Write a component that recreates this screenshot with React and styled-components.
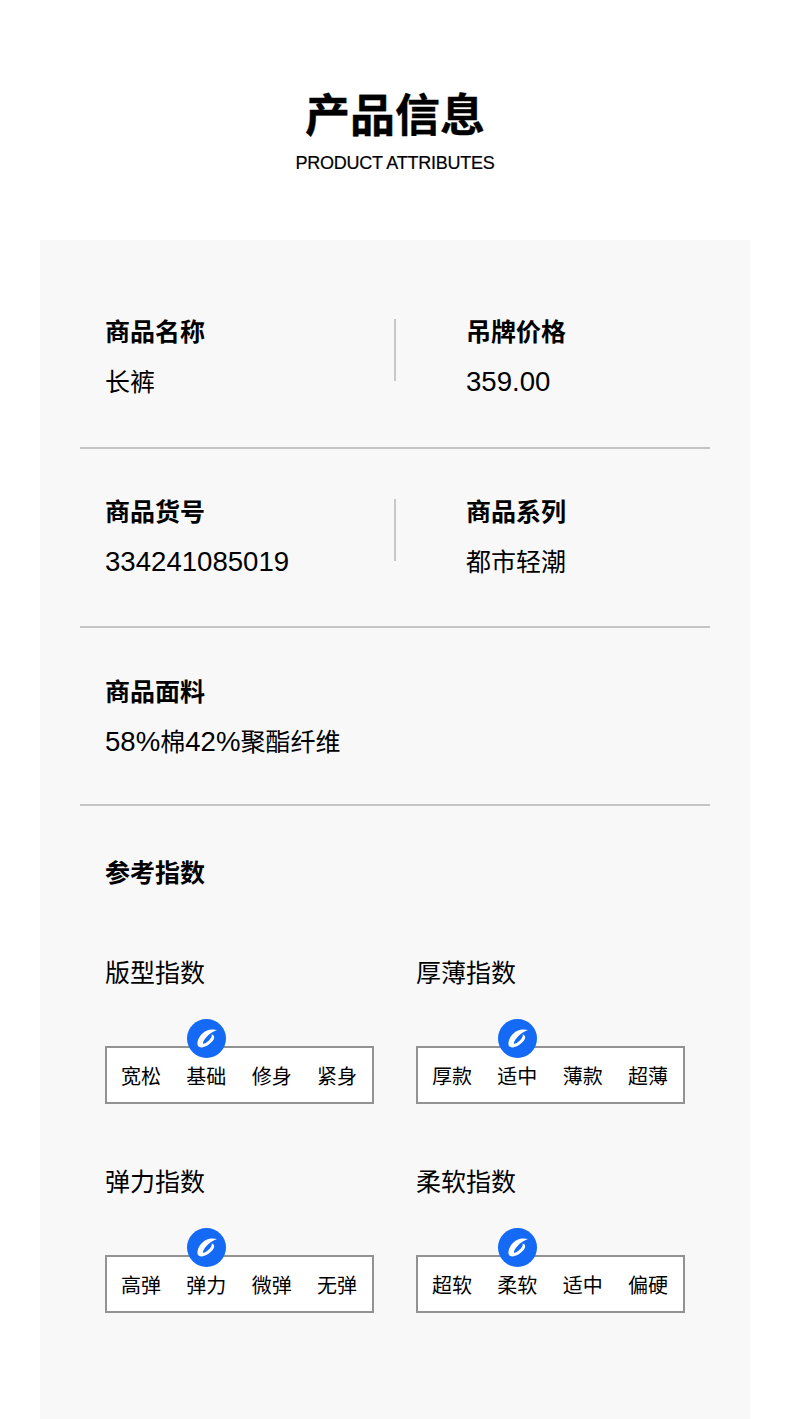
import styled, { createGlobalStyle } from 'styled-components';

const GlobalStyle = createGlobalStyle`
  html, body {
    margin: 0;
    padding: 0;
    background: #fff;
  }
  body {
    font-family: "Liberation Sans", "Noto Sans CJK SC", sans-serif;
    color: #000;
  }
`;

const Page = styled.div`
  width: 790px;
  height: 1419px;
  overflow: hidden;
  background: #fff;
`;

const Header = styled.div`
  height: 240px;
  padding-top: 91px;
  box-sizing: border-box;
  text-align: center;
`;

const Title = styled.h1`
  margin: 0;
  font-size: 45px;
  line-height: 52px;
  font-weight: 700;
  -webkit-text-stroke: 0.4px #000;
`;

const SubTitle = styled.div`
  margin-top: 10px;
  font-size: 18px;
  line-height: 20px;
  letter-spacing: -0.25px;
  -webkit-text-stroke: 0.2px #000;
`;

const Panel = styled.div`
  margin: 0 40px;
  padding: 0 40px;
  height: 1179px;
  background: #f8f8f8;
`;

const Row = styled.div`
  display: flex;
  height: ${p => p.$height}px;
  padding-top: ${p => p.$top}px;
  box-sizing: border-box;
  border-bottom: 2px solid #c4c4c4;
`;

const Cell = styled.div`
  width: ${p => (p.$divided ? 316 : 314)}px;
  height: 62px;
  box-sizing: border-box;
  padding-left: ${p => (p.$right ? 70 : 25)}px;
  border-right: ${p => (p.$divided ? '2px solid #c8c8c8' : 'none')};
`;

const Label = styled.div`
  margin-top: -1px;
  font-size: 25px;
  line-height: 28px;
  font-weight: 700;
`;

const Value = styled.div`
  margin-top: 21px;
  font-size: 25px;
  line-height: 30px;
  height: 28px;
  font-weight: 400;
  white-space: nowrap;
`;

const Num = styled.span`
  font-size: 27.6px;
`;

const Section = styled.div`
  padding: 53px 25px 0;
`;

const SectionTitle = styled(Label)`
  margin-top: 0;
`;

const Grid = styled.div`
  display: grid;
  grid-template-columns: 269px 269px;
  column-gap: 42px;
  row-gap: 63px;
  margin-top: 71px;
`;

const IndexName = styled.div`
  font-size: 25px;
  line-height: 30px;
`;

const Scale = styled.div`
  position: relative;
  display: flex;
  align-items: center;
  justify-content: space-between;
  height: 58px;
  margin-top: 58px;
  padding: 3px 15px 0 14px;
  box-sizing: border-box;
  border: 2px solid #929292;
  background: #fff;
`;

const Option = styled.span`
  font-size: 20px;
  line-height: 24px;
  white-space: nowrap;
`;

const Badge = styled.div`
  position: absolute;
  top: -29px;
  left: 80px;
  width: 39px;
  height: 39px;
  border-radius: 50%;
  background: #1469f5;
  display: flex;
  align-items: center;
  justify-content: center;
`;

const Swoosh = () => (
  <svg width="20" height="19" viewBox="0 0 20 19">
    <path
      fill="#fff"
      d="M20 1C14.500 -.6 7.500 1 3.500 6.500 .4 10.800 -.8 16 2 17.800 5.500 19.800 12 16.500 15.800 11.800 18 8.800 17.600 5.800 14.500 5.400 15.400 7 14 9.500 11.500 11.800 9 14 6.600 15.300 6 14.500 5.500 13.500 8 8.800 12.700 5 15 3.200 17.500 2 20 1Z"
    />
  </svg>
);

const indexes = [
  { name: '版型指数', options: ['宽松', '基础', '修身', '紧身'] },
  { name: '厚薄指数', options: ['厚款', '适中', '薄款', '超薄'] },
  { name: '弹力指数', options: ['高弹', '弹力', '微弹', '无弹'] },
  { name: '柔软指数', options: ['超软', '柔软', '适中', '偏硬'] },
];

export default function App() {
  return (
    <Page>
      <GlobalStyle />
      <Header>
        <Title>产品信息</Title>
        <SubTitle>PRODUCT ATTRIBUTES</SubTitle>
      </Header>
      <Panel>
        <Row $height={209} $top={79}>
          <Cell $divided>
            <Label>商品名称</Label>
            <Value>长裤</Value>
          </Cell>
          <Cell $right>
            <Label>吊牌价格</Label>
            <Value><Num>359.00</Num></Value>
          </Cell>
        </Row>
        <Row $height={179} $top={50}>
          <Cell $divided>
            <Label>商品货号</Label>
            <Value><Num>334241085019</Num></Value>
          </Cell>
          <Cell $right>
            <Label>商品系列</Label>
            <Value>都市轻潮</Value>
          </Cell>
        </Row>
        <Row $height={178} $top={51}>
          <Cell>
            <Label>商品面料</Label>
            <Value><Num>58%</Num>棉<Num>42%</Num>聚酯纤维</Value>
          </Cell>
        </Row>
        <Section>
          <SectionTitle>参考指数</SectionTitle>
          <Grid>
            {indexes.map(item => (
              <div key={item.name}>
                <IndexName>{item.name}</IndexName>
                <Scale>
                  {item.options.map(o => <Option key={o}>{o}</Option>)}
                  <Badge><Swoosh /></Badge>
                </Scale>
              </div>
            ))}
          </Grid>
        </Section>
      </Panel>
    </Page>
  );
}
